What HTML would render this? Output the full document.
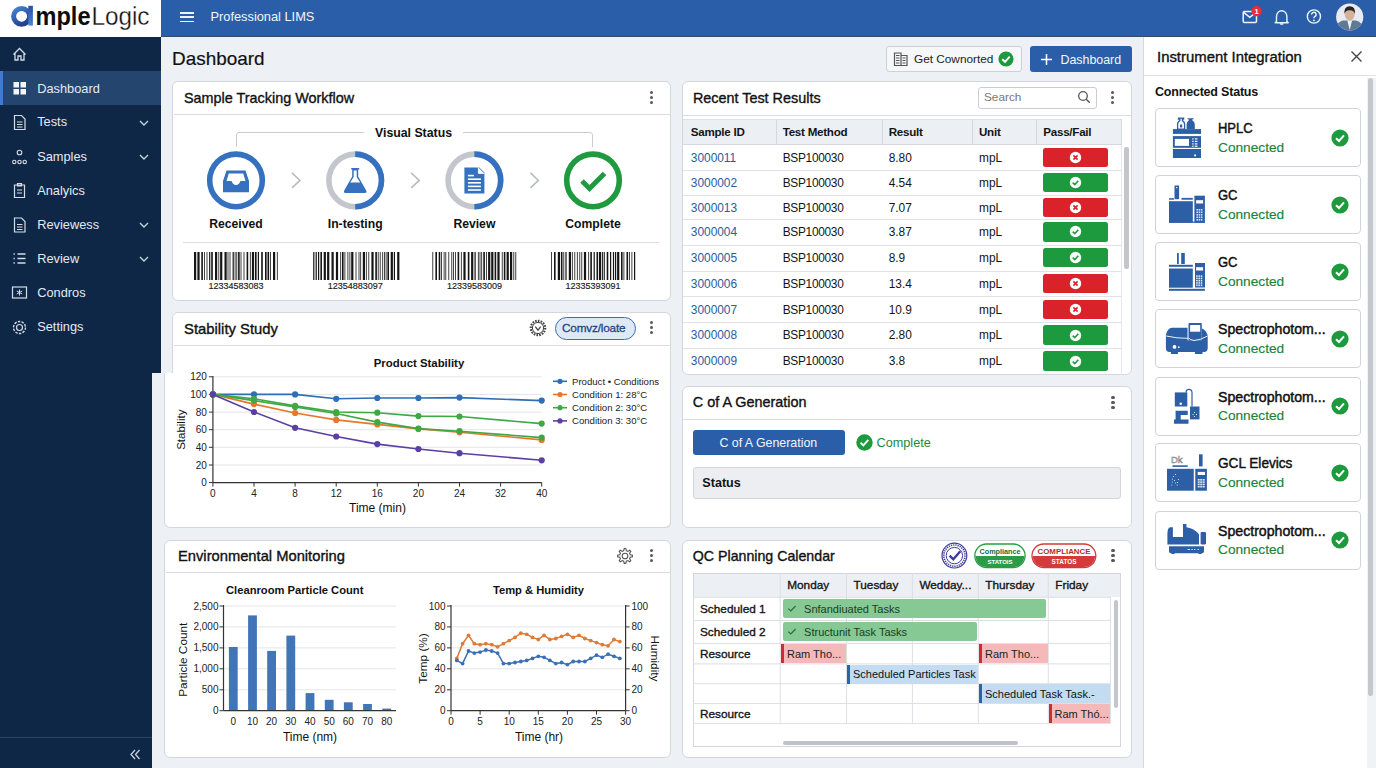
<!DOCTYPE html><html><head><meta charset="utf-8"><style>
*{box-sizing:border-box;margin:0;padding:0}
html,body{width:1376px;height:768px;overflow:hidden}
body{font-family:"Liberation Sans",sans-serif;background:#edf0f5;position:relative;color:#141414}
.ab{position:absolute}
.t{position:absolute;white-space:nowrap;line-height:1}
.card{position:absolute;background:#fff;border:1px solid #d3d7dd;border-radius:6px}
.hline{position:absolute;height:1px;background:#d9dce2}
.vline{position:absolute;width:1px;background:#d9dce2}
.dots{position:absolute;width:4px}
.dots i{position:absolute;left:0.2px;width:3.2px;height:3.2px;border-radius:50%;background:#55585d}
.nav{color:#e3e8ef;font-size:13.4px}
.med{-webkit-text-stroke:0.25px currentColor}
</style></head><body>
<div class="ab" style="left:0;top:0;width:161px;height:37px;background:#fff"></div>
<div class="ab" style="left:161px;top:0;width:1215px;height:37px;background:#2a5ea8;border-bottom:1px solid #3a4a60"></div>
<svg class="ab" style="left:0;top:0" width="161" height="37" viewBox="0 0 161 37">
<defs><linearGradient id="lg" x1="0" y1="0" x2="0.6" y2="1"><stop offset="0" stop-color="#4583d4"/><stop offset="1" stop-color="#233f8e"/></linearGradient>
<linearGradient id="lg2" x1="0" y1="0" x2="0" y2="1"><stop offset="0" stop-color="#2d4f9f"/><stop offset="1" stop-color="#4a86d2"/></linearGradient></defs>
<ellipse cx="21.6" cy="16.3" rx="8" ry="7.9" fill="none" stroke="url(#lg)" stroke-width="5"/>
<rect x="28.3" y="5.8" width="4.6" height="19.8" fill="url(#lg2)"/>
<text x="35.5" y="25" font-family="Liberation Sans" font-weight="bold" font-size="26.5" fill="#0d0d0d" textLength="55" lengthAdjust="spacingAndGlyphs">mple</text>
<text x="91.5" y="25" font-family="Liberation Sans" font-size="26" fill="#111" stroke="#fff" stroke-width="0.3" textLength="58" lengthAdjust="spacingAndGlyphs">Logic</text>
</svg>
<div class="ab" style="left:180px;top:12.0px;width:14px;height:1.8px;background:#f0f4fa"></div>
<div class="ab" style="left:180px;top:16.3px;width:14px;height:1.8px;background:#f0f4fa"></div>
<div class="ab" style="left:180px;top:20.6px;width:14px;height:1.8px;background:#f0f4fa"></div>
<div class="t" style="left:210.5px;top:10.7px;font-size:12.8px;color:#f2f5fa;">Professional LIMS</div>
<svg class="ab" style="left:1230px;top:0" width="146" height="37" viewBox="0 0 146 37">
<rect x="13.2" y="11.6" width="13.3" height="10.8" rx="1.2" fill="none" stroke="#eef3fb" stroke-width="1.5"/>
<path d="M13.6 12.3 L19.8 17.3 L26 12.3" fill="none" stroke="#eef3fb" stroke-width="1.5"/>
<circle cx="26.5" cy="11" r="5.2" fill="#e0303a"/>
<text x="26.5" y="14" font-family="Liberation Sans" font-weight="bold" font-size="7.5" fill="#fff" text-anchor="middle">1</text>
<path d="M46.5 21.5 L46.5 16.5 A5.2 5.8 0 0 1 56.9 16.5 L56.9 21.5 L58.2 22.8 L45.2 22.8 Z" fill="none" stroke="#eef3fb" stroke-width="1.4" stroke-linejoin="round"/>
<path d="M50.3 23.3 A1.6 1.6 0 0 0 53.1 23.3" fill="none" stroke="#eef3fb" stroke-width="1.4"/>
<circle cx="83.9" cy="16.5" r="6.6" fill="none" stroke="#eef3fb" stroke-width="1.4"/>
<path d="M81.7 14.6 A2.2 2.2 0 1 1 84.6 16.6 Q83.9 17 83.9 18.3" fill="none" stroke="#eef3fb" stroke-width="1.4"/>
<circle cx="83.9" cy="20.4" r="0.9" fill="#eef3fb"/>
<circle cx="119.7" cy="17" r="13.6" fill="#e8ecf2"/>
<clipPath id="av"><circle cx="119.7" cy="17" r="13.6"/></clipPath>
<g clip-path="url(#av)">
<path d="M104 32 Q106 22.5 113 20.6 L126 20.6 Q133 22.5 135 32 Z" fill="#607a96"/>
<path d="M117.3 20.6 L119.7 30 L122.1 20.6 Z" fill="#eef1f4"/>
<ellipse cx="119.7" cy="14.6" rx="4.9" ry="5.7" fill="#d6b29a"/>
<path d="M114.6 14 Q113.6 6.3 119.7 6.3 Q125.8 6.3 124.8 14 Q124 10 119.7 10.2 Q115.4 10 114.6 14Z" fill="#2a2521"/>
</g>
</svg>
<div class="ab" style="left:0;top:37px;width:161px;height:336px;background:#0f2747"></div>
<div class="ab" style="left:0;top:373px;width:152px;height:395px;background:#0f2747"></div>
<div class="ab" style="left:0;top:71px;width:161px;height:34px;background:#24466e"></div>
<div class="ab" style="left:0;top:71px;width:3px;height:34px;background:#3c7bd0"></div>
<div class="ab" style="left:0;top:736.5px;width:152px;height:1px;background:#2a4566"></div>
<div class="t" style="left:37.2px;top:82.6px;font-size:12.8px;color:#e4e9f0;">Dashboard</div>
<div class="t" style="left:37.2px;top:116.4px;font-size:12.8px;color:#e4e9f0;">Tests</div>
<svg class="ab" style="left:138px;top:118.8px" width="12" height="8" viewBox="0 0 12 8"><path d="M2 2 L6 6 L10 2" fill="none" stroke="#c8d1dc" stroke-width="1.4"/></svg>
<div class="t" style="left:37.2px;top:150.6px;font-size:12.8px;color:#e4e9f0;">Samples</div>
<svg class="ab" style="left:138px;top:153.0px" width="12" height="8" viewBox="0 0 12 8"><path d="M2 2 L6 6 L10 2" fill="none" stroke="#c8d1dc" stroke-width="1.4"/></svg>
<div class="t" style="left:37.2px;top:184.6px;font-size:12.8px;color:#e4e9f0;">Analyics</div>
<div class="t" style="left:37.2px;top:218.6px;font-size:12.8px;color:#e4e9f0;">Reviewess</div>
<svg class="ab" style="left:138px;top:221.0px" width="12" height="8" viewBox="0 0 12 8"><path d="M2 2 L6 6 L10 2" fill="none" stroke="#c8d1dc" stroke-width="1.4"/></svg>
<div class="t" style="left:37.2px;top:252.6px;font-size:12.8px;color:#e4e9f0;">Review</div>
<svg class="ab" style="left:138px;top:255.0px" width="12" height="8" viewBox="0 0 12 8"><path d="M2 2 L6 6 L10 2" fill="none" stroke="#c8d1dc" stroke-width="1.4"/></svg>
<div class="t" style="left:37.2px;top:286.6px;font-size:12.8px;color:#e4e9f0;">Condros</div>
<div class="t" style="left:37.2px;top:320.6px;font-size:12.8px;color:#e4e9f0;">Settings</div>
<svg class="ab" style="left:0;top:37px" width="161" height="336" viewBox="0 37 161 336">
<path d="M13.5 54.5 L19.5 48.5 L25.5 54.5 M15 53.5 L15 60 L18 60 L18 56 L21 56 L21 60 L24 60 L24 53.5" fill="none" stroke="#d5dce6" stroke-width="1.3"/>
<rect x="13.5" y="82" width="5.5" height="5.5" fill="#f2f5fa"/><rect x="20.5" y="82" width="5.5" height="5.5" fill="#f2f5fa"/>
<rect x="13.5" y="89" width="5.5" height="5.5" fill="#f2f5fa"/><rect x="20.5" y="89" width="5.5" height="5.5" fill="#f2f5fa"/>
<path d="M14.5 115.5 L21.5 115.5 L25 119 L25 129.5 L14.5 129.5 Z M17 122 L22.5 122 M17 124.5 L22.5 124.5 M17 127 L22.5 127" fill="none" stroke="#d5dce6" stroke-width="1.2"/>
<circle cx="19.5" cy="152.5" r="2.3" fill="none" stroke="#d5dce6" stroke-width="1.1"/>
<circle cx="14.3" cy="162" r="1.7" fill="none" stroke="#d5dce6" stroke-width="1.1"/><circle cx="19.5" cy="162" r="1.7" fill="none" stroke="#d5dce6" stroke-width="1.1"/><circle cx="24.7" cy="162" r="1.7" fill="none" stroke="#d5dce6" stroke-width="1.1"/>
<path d="M14.5 185 L24.5 185 L24.5 197.5 L14.5 197.5 Z M17.5 183.5 L21.5 183.5 L21.5 186 L17.5 186Z M17 190 L22 190 M17 193 L22 193" fill="none" stroke="#d5dce6" stroke-width="1.2"/>
<path d="M14.5 218 L21.5 218 L25 221.5 L25 232 L14.5 232 Z M17 224.5 L22.5 224.5 M17 227 L22.5 227 M17 229.5 L22.5 229.5" fill="none" stroke="#d5dce6" stroke-width="1.2"/>
<path d="M17.5 254 L25.5 254 M17.5 258.5 L25.5 258.5 M17.5 263 L25.5 263 M13.5 254 L14.8 254 M13.5 258.5 L14.8 258.5 M13.5 263 L14.8 263" fill="none" stroke="#d5dce6" stroke-width="1.3"/>
<rect x="12.5" y="287" width="14" height="11" fill="none" stroke="#d5dce6" stroke-width="1.2"/>
<path d="M19.5 289.5 L19.5 295.5 M16.8 291 L22.2 294 M22.2 291 L16.8 294" stroke="#d5dce6" stroke-width="1"/>
<circle cx="19.5" cy="327.5" r="3" fill="none" stroke="#d5dce6" stroke-width="1.2"/>
<circle cx="19.5" cy="327.5" r="6" fill="none" stroke="#d5dce6" stroke-width="1.4" stroke-dasharray="2.4 1.3"/>
</svg>
<svg class="ab" style="left:128px;top:748px" width="14" height="13" viewBox="0 0 14 13"><path d="M7 2 L3 6.5 L7 11 M11.5 2 L7.5 6.5 L11.5 11" fill="none" stroke="#c8d1dc" stroke-width="1.3"/></svg>
<div class="t" style="left:172.3px;top:48.8px;font-size:19px;color:#111;transform:scaleX(0.9952);transform-origin:0 0;-webkit-text-stroke:0.2px #111">Dashboard</div>
<div class="ab" style="left:886px;top:46px;width:136px;height:26px;background:#f6f7f9;border:1px solid #cdd1d7;border-radius:3px"></div>
<svg class="ab" style="left:893px;top:51px" width="16" height="16" viewBox="0 0 16 16">
<path d="M1.5 2 L8 2 L8 14.5 L1.5 14.5 Z M8 4.5 L14 4.5 L14 14.5 L8 14.5" fill="none" stroke="#555" stroke-width="1.2"/>
<path d="M3 4.5 L6.5 4.5 M3 7 L6.5 7 M3 9.5 L6.5 9.5 M3 12 L6.5 12 M9.5 7 L12.5 7 M9.5 9.5 L12.5 9.5 M9.5 12 L12.5 12" stroke="#555" stroke-width="1"/>
</svg>
<div class="t" style="left:914.0px;top:53.6px;font-size:11.8px;color:#222;">Get Cownorted</div>
<svg class="ab" style="left:998px;top:51px" width="16" height="16" viewBox="0 0 16 16"><circle cx="8" cy="8" r="7.6" fill="#1e9a3e"/><path d="M4.3 8.2 L7 10.8 L11.7 5.6" fill="none" stroke="#fff" stroke-width="1.9"/></svg>
<div class="ab" style="left:1030px;top:46px;width:102px;height:26px;background:#2a5ea8;border-radius:3px"></div>
<svg class="ab" style="left:1040px;top:53px" width="13" height="13" viewBox="0 0 13 13"><path d="M6.5 1 L6.5 12 M1 6.5 L12 6.5" stroke="#fff" stroke-width="1.5"/></svg>
<div class="t" style="left:1060.5px;top:53.5px;font-size:12.4px;color:#f4f7fb;">Dashboard</div>
<div class="card" style="left:172px;top:81px;width:499px;height:220px"></div>
<div class="hline" style="left:174px;top:114px;width:496px"></div>
<div class="t" style="left:184.0px;top:90.8px;font-size:14.4px;color:#111;-webkit-text-stroke:0.35px #111">Sample Tracking Workflow</div>
<div class="dots" style="left:649.7px;top:90.5px;height:14px"><i style="top:0"></i><i style="top:5px"></i><i style="top:10px"></i></div>
<svg class="ab" style="left:173px;top:81px" width="498" height="220" viewBox="173 81 498 220"><path d="M236.5 147 L236.5 135 Q236.5 132.5 239 132.5 L364 132.5 M463 132.5 L590 132.5 Q592.5 132.5 592.5 135 L592.5 147" fill="none" stroke="#c9ccd2" stroke-width="1"/></svg>
<div class="t" style="left:375.0px;top:126.8px;font-size:12.3px;color:#111;font-weight:bold;">Visual Status</div>
<svg class="ab" style="left:173px;top:140px" width="498" height="100" viewBox="173 140 498 100"><circle cx="236" cy="180.4" r="26.3" fill="none" stroke="#3571bf" stroke-width="5.6"/><circle cx="355.2" cy="180.4" r="26.3" fill="none" stroke="#c3c7cd" stroke-width="5.6"/><path d="M355.2 154.1 A26.3 26.3 0 0 1 355.2 206.70000000000002" fill="none" stroke="#3571bf" stroke-width="5.6"/><circle cx="474.4" cy="180.4" r="26.3" fill="none" stroke="#c3c7cd" stroke-width="5.6"/><path d="M474.4 154.1 A26.3 26.3 0 0 1 474.4 206.70000000000002" fill="none" stroke="#3571bf" stroke-width="5.6"/><circle cx="593" cy="180.4" r="26.3" fill="none" stroke="#1f9a3f" stroke-width="5.6"/><path d="M223 180.9 L226.5 170.4 L245.5 170.4 L249 180.9 L249 192.20000000000002 L223 192.20000000000002 Z" fill="#3571bf"/><path d="M226.5 180.9 L228.8 173.4 L243.2 173.4 L245.5 180.9 L240.5 180.9 Q239 184.9 236 184.9 Q233 184.9 231.5 180.9 Z" fill="#fff"/><path d="M351.2 167.9 L359.2 167.9 L359.2 169.4 L358.2 169.4 L358.2 176.4 L366.2 190.4 Q367.2 192.9 364.7 192.9 L345.7 192.9 Q343.2 192.9 344.2 190.4 L352.2 176.4 L352.2 169.4 L351.2 169.4 Z" fill="#3571bf"/><path d="M353.7 170.4 L356.7 170.4 L356.7 176.9 L360.2 182.4 L350.2 182.4 L353.7 176.9 Z" fill="#fff"/><path d="M464.4 167.4 L479.4 167.4 L484.4 172.4 L484.4 193.4 L464.4 193.4 Z" fill="#3571bf"/><path d="M478.4 167.4 L478.4 173.4 L484.4 173.4" fill="#fff" stroke="#fff" stroke-width="0.8"/><rect x="467.9" y="178.4" width="13" height="1.6" fill="#fff"/><rect x="467.9" y="182.0" width="13" height="1.6" fill="#fff"/><rect x="467.9" y="185.6" width="13" height="1.6" fill="#fff"/><rect x="467.9" y="189.2" width="13" height="1.6" fill="#fff"/><rect x="467.9" y="174.8" width="6" height="1.6" fill="#fff"/><path d="M582 180.9 L589.5 188.4 L604.5 173.4" fill="none" stroke="#1f9a3f" stroke-width="5"/><path d="M292 172.9 L300 180.4 L292 187.9" fill="none" stroke="#b8bcc2" stroke-width="1.6"/><path d="M411.2 172.9 L419.2 180.4 L411.2 187.9" fill="none" stroke="#b8bcc2" stroke-width="1.6"/><path d="M530.4 172.9 L538.4 180.4 L530.4 187.9" fill="none" stroke="#b8bcc2" stroke-width="1.6"/></svg>
<div class="t" style="left:186px;width:100px;text-align:center;top:217.6px;font-size:12.2px;font-weight:bold;color:#111">Received</div>
<div class="t" style="left:305.2px;width:100px;text-align:center;top:217.6px;font-size:12.2px;font-weight:bold;color:#111">In-testing</div>
<div class="t" style="left:424.4px;width:100px;text-align:center;top:217.6px;font-size:12.2px;font-weight:bold;color:#111">Review</div>
<div class="t" style="left:543px;width:100px;text-align:center;top:217.6px;font-size:12.2px;font-weight:bold;color:#111">Complete</div>
<div class="hline" style="left:183px;top:241.5px;width:476px;background:#dcdfe4"></div>
<svg class="ab" style="left:173px;top:245px" width="498" height="55" viewBox="173 245 498 55"><rect x="194.0" y="252" width="2.2" height="28" fill="#151515"/><rect x="197.4" y="252" width="2.2" height="28" fill="#151515"/><rect x="201.3" y="252" width="1.6" height="28" fill="#151515"/><rect x="204.1" y="252" width="0.8" height="28" fill="#151515"/><rect x="206.6" y="252" width="0.8" height="28" fill="#151515"/><rect x="209.1" y="252" width="1.2" height="28" fill="#151515"/><rect x="211.2" y="252" width="1.6" height="28" fill="#151515"/><rect x="215.0" y="252" width="2.2" height="28" fill="#151515"/><rect x="218.4" y="252" width="0.8" height="28" fill="#151515"/><rect x="220.1" y="252" width="2.2" height="28" fill="#151515"/><rect x="224.5" y="252" width="2.2" height="28" fill="#151515"/><rect x="227.6" y="252" width="0.8" height="28" fill="#151515"/><rect x="229.6" y="252" width="0.8" height="28" fill="#151515"/><rect x="232.6" y="252" width="1.2" height="28" fill="#151515"/><rect x="234.7" y="252" width="0.8" height="28" fill="#151515"/><rect x="236.4" y="252" width="0.8" height="28" fill="#151515"/><rect x="238.1" y="252" width="1.6" height="28" fill="#151515"/><rect x="240.6" y="252" width="0.8" height="28" fill="#151515"/><rect x="243.6" y="252" width="0.8" height="28" fill="#151515"/><rect x="246.6" y="252" width="1.6" height="28" fill="#151515"/><rect x="249.9" y="252" width="0.8" height="28" fill="#151515"/><rect x="251.9" y="252" width="2.2" height="28" fill="#151515"/><rect x="255.0" y="252" width="1.6" height="28" fill="#151515"/><rect x="257.8" y="252" width="1.2" height="28" fill="#151515"/><rect x="261.2" y="252" width="1.6" height="28" fill="#151515"/><rect x="265.0" y="252" width="1.6" height="28" fill="#151515"/><rect x="267.5" y="252" width="1.6" height="28" fill="#151515"/><rect x="270.0" y="252" width="0.8" height="28" fill="#151515"/><rect x="273.0" y="252" width="2.2" height="28" fill="#151515"/><rect x="276.9" y="252" width="0.8" height="28" fill="#151515"/><text x="236" y="289.3" font-family="Liberation Sans" font-size="9" fill="#1a1a1a" stroke="#1a1a1a" stroke-width="0.15" text-anchor="middle" textLength="55" lengthAdjust="spacingAndGlyphs">12334583083</text><rect x="313.2" y="252" width="1.2" height="28" fill="#151515"/><rect x="315.6" y="252" width="1.2" height="28" fill="#151515"/><rect x="318.0" y="252" width="1.2" height="28" fill="#151515"/><rect x="320.4" y="252" width="1.6" height="28" fill="#151515"/><rect x="323.7" y="252" width="2.2" height="28" fill="#151515"/><rect x="327.1" y="252" width="2.2" height="28" fill="#151515"/><rect x="331.5" y="252" width="2.2" height="28" fill="#151515"/><rect x="335.9" y="252" width="2.2" height="28" fill="#151515"/><rect x="340.3" y="252" width="0.8" height="28" fill="#151515"/><rect x="342.0" y="252" width="1.6" height="28" fill="#151515"/><rect x="344.5" y="252" width="0.8" height="28" fill="#151515"/><rect x="347.5" y="252" width="0.8" height="28" fill="#151515"/><rect x="349.5" y="252" width="0.8" height="28" fill="#151515"/><rect x="351.2" y="252" width="2.2" height="28" fill="#151515"/><rect x="355.6" y="252" width="0.8" height="28" fill="#151515"/><rect x="358.6" y="252" width="0.8" height="28" fill="#151515"/><rect x="360.3" y="252" width="0.8" height="28" fill="#151515"/><rect x="362.8" y="252" width="2.2" height="28" fill="#151515"/><rect x="365.9" y="252" width="0.8" height="28" fill="#151515"/><rect x="368.4" y="252" width="0.8" height="28" fill="#151515"/><rect x="371.4" y="252" width="2.2" height="28" fill="#151515"/><rect x="375.3" y="252" width="1.6" height="28" fill="#151515"/><rect x="377.8" y="252" width="0.8" height="28" fill="#151515"/><rect x="379.8" y="252" width="0.8" height="28" fill="#151515"/><rect x="382.3" y="252" width="0.8" height="28" fill="#151515"/><rect x="384.0" y="252" width="0.8" height="28" fill="#151515"/><rect x="385.7" y="252" width="0.8" height="28" fill="#151515"/><rect x="387.4" y="252" width="1.6" height="28" fill="#151515"/><rect x="390.7" y="252" width="2.2" height="28" fill="#151515"/><rect x="393.8" y="252" width="1.2" height="28" fill="#151515"/><rect x="397.2" y="252" width="2.2" height="28" fill="#151515"/><text x="355.2" y="289.3" font-family="Liberation Sans" font-size="9" fill="#1a1a1a" stroke="#1a1a1a" stroke-width="0.15" text-anchor="middle" textLength="55" lengthAdjust="spacingAndGlyphs">12354883097</text><rect x="432.4" y="252" width="0.8" height="28" fill="#151515"/><rect x="435.4" y="252" width="1.6" height="28" fill="#151515"/><rect x="438.7" y="252" width="1.6" height="28" fill="#151515"/><rect x="441.2" y="252" width="0.8" height="28" fill="#151515"/><rect x="443.7" y="252" width="0.8" height="28" fill="#151515"/><rect x="445.4" y="252" width="0.8" height="28" fill="#151515"/><rect x="448.4" y="252" width="0.8" height="28" fill="#151515"/><rect x="451.4" y="252" width="0.8" height="28" fill="#151515"/><rect x="453.1" y="252" width="0.8" height="28" fill="#151515"/><rect x="455.1" y="252" width="0.8" height="28" fill="#151515"/><rect x="457.6" y="252" width="1.6" height="28" fill="#151515"/><rect x="460.9" y="252" width="0.8" height="28" fill="#151515"/><rect x="463.4" y="252" width="2.2" height="28" fill="#151515"/><rect x="467.8" y="252" width="1.6" height="28" fill="#151515"/><rect x="471.1" y="252" width="2.2" height="28" fill="#151515"/><rect x="474.5" y="252" width="1.2" height="28" fill="#151515"/><rect x="477.9" y="252" width="0.8" height="28" fill="#151515"/><rect x="479.6" y="252" width="0.8" height="28" fill="#151515"/><rect x="481.3" y="252" width="0.8" height="28" fill="#151515"/><rect x="483.3" y="252" width="1.6" height="28" fill="#151515"/><rect x="486.1" y="252" width="0.8" height="28" fill="#151515"/><rect x="488.1" y="252" width="2.2" height="28" fill="#151515"/><rect x="491.2" y="252" width="2.2" height="28" fill="#151515"/><rect x="494.6" y="252" width="1.6" height="28" fill="#151515"/><rect x="497.4" y="252" width="2.2" height="28" fill="#151515"/><rect x="501.8" y="252" width="0.8" height="28" fill="#151515"/><rect x="503.8" y="252" width="1.6" height="28" fill="#151515"/><rect x="506.6" y="252" width="2.2" height="28" fill="#151515"/><rect x="510.0" y="252" width="2.2" height="28" fill="#151515"/><rect x="513.4" y="252" width="0.8" height="28" fill="#151515"/><rect x="515.4" y="252" width="0.8" height="28" fill="#151515"/><text x="474.4" y="289.3" font-family="Liberation Sans" font-size="9" fill="#1a1a1a" stroke="#1a1a1a" stroke-width="0.15" text-anchor="middle" textLength="55" lengthAdjust="spacingAndGlyphs">12339583009</text><rect x="551.0" y="252" width="0.8" height="28" fill="#151515"/><rect x="554.0" y="252" width="1.6" height="28" fill="#151515"/><rect x="557.8" y="252" width="2.2" height="28" fill="#151515"/><rect x="560.9" y="252" width="1.6" height="28" fill="#151515"/><rect x="563.4" y="252" width="0.8" height="28" fill="#151515"/><rect x="565.4" y="252" width="1.2" height="28" fill="#151515"/><rect x="568.8" y="252" width="2.2" height="28" fill="#151515"/><rect x="571.9" y="252" width="0.8" height="28" fill="#151515"/><rect x="574.4" y="252" width="0.8" height="28" fill="#151515"/><rect x="576.9" y="252" width="0.8" height="28" fill="#151515"/><rect x="579.4" y="252" width="0.8" height="28" fill="#151515"/><rect x="581.4" y="252" width="0.8" height="28" fill="#151515"/><rect x="583.9" y="252" width="2.2" height="28" fill="#151515"/><rect x="588.3" y="252" width="0.8" height="28" fill="#151515"/><rect x="590.3" y="252" width="1.6" height="28" fill="#151515"/><rect x="593.6" y="252" width="1.2" height="28" fill="#151515"/><rect x="596.5" y="252" width="1.6" height="28" fill="#151515"/><rect x="599.0" y="252" width="2.2" height="28" fill="#151515"/><rect x="602.1" y="252" width="1.2" height="28" fill="#151515"/><rect x="604.2" y="252" width="0.8" height="28" fill="#151515"/><rect x="606.7" y="252" width="1.6" height="28" fill="#151515"/><rect x="610.0" y="252" width="1.2" height="28" fill="#151515"/><rect x="612.9" y="252" width="1.2" height="28" fill="#151515"/><rect x="615.0" y="252" width="1.2" height="28" fill="#151515"/><rect x="617.1" y="252" width="2.2" height="28" fill="#151515"/><rect x="621.0" y="252" width="1.6" height="28" fill="#151515"/><rect x="623.5" y="252" width="0.8" height="28" fill="#151515"/><rect x="626.5" y="252" width="1.6" height="28" fill="#151515"/><rect x="629.0" y="252" width="0.8" height="28" fill="#151515"/><rect x="631.5" y="252" width="0.8" height="28" fill="#151515"/><rect x="634.0" y="252" width="1.2" height="28" fill="#151515"/><text x="593" y="289.3" font-family="Liberation Sans" font-size="9" fill="#1a1a1a" stroke="#1a1a1a" stroke-width="0.15" text-anchor="middle" textLength="55" lengthAdjust="spacingAndGlyphs">12335393091</text></svg>
<div class="ab" style="left:172px;top:312px;width:499px;height:216px;background:#fff;border:1px solid #d3d7dd;border-radius:6px"></div>
<div class="ab" style="left:152px;top:373px;width:20px;height:160px;background:#edf0f5"></div>
<div class="ab" style="left:164px;top:373px;width:507px;height:155px;background:#fff;border:1px solid #d3d7dd;border-top:none;border-radius:0 0 6px 6px"></div>
<div class="ab" style="left:165px;top:373px;width:505px;height:3px;background:#fff"></div>
<div class="hline" style="left:174px;top:344.5px;width:496px"></div>
<div class="t" style="left:183.5px;top:321.5px;font-size:14.5px;color:#111;transform:scaleX(1.0231);transform-origin:0 0;-webkit-text-stroke:0.35px #111">Stability Study</div>
<svg class="ab" style="left:528px;top:318px" width="20" height="20" viewBox="0 0 20 20">
<circle cx="10" cy="10" r="7.2" fill="none" stroke="#444" stroke-width="2.2" stroke-dasharray="1.6 1.2"/>
<circle cx="10" cy="10" r="5.6" fill="#fff" stroke="#444" stroke-width="1"/>
<path d="M7.3 8.6 L10 12.2 L12.7 8.6" fill="none" stroke="#444" stroke-width="1.2"/></svg>
<div class="ab" style="left:554.5px;top:317px;width:81px;height:23px;background:#dfe9f6;border:1.3px solid #3a6cb2;border-radius:12px"></div>
<div class="t" style="left:562.0px;top:322.6px;font-size:11.8px;color:#1f4585;-webkit-text-stroke:0.3px #1f4585;letter-spacing:-0.2px">Comvz/loate</div>
<div class="dots" style="left:649.7px;top:321.0px;height:14px"><i style="top:0"></i><i style="top:5px"></i><i style="top:10px"></i></div>
<svg class="ab" style="left:0;top:0" width="680" height="530" viewBox="0 0 680 530"><text x="419" y="367.3" font-family="Liberation Sans" font-weight="bold" font-size="11.4" fill="#111" text-anchor="middle">Product Stability</text><line x1="208.9" y1="482.6" x2="212.9" y2="482.6" stroke="#333" stroke-width="1"/><text x="206.9" y="486.2" font-family="Liberation Sans" font-size="10" fill="#222" text-anchor="end">0</text><line x1="212.9" y1="465.0" x2="541.7" y2="465.0" stroke="#e3e5e9" stroke-width="1"/><line x1="208.9" y1="465.0" x2="212.9" y2="465.0" stroke="#333" stroke-width="1"/><text x="206.9" y="468.6" font-family="Liberation Sans" font-size="10" fill="#222" text-anchor="end">20</text><line x1="212.9" y1="447.3" x2="541.7" y2="447.3" stroke="#e3e5e9" stroke-width="1"/><line x1="208.9" y1="447.3" x2="212.9" y2="447.3" stroke="#333" stroke-width="1"/><text x="206.9" y="450.9" font-family="Liberation Sans" font-size="10" fill="#222" text-anchor="end">40</text><line x1="212.9" y1="429.7" x2="541.7" y2="429.7" stroke="#e3e5e9" stroke-width="1"/><line x1="208.9" y1="429.7" x2="212.9" y2="429.7" stroke="#333" stroke-width="1"/><text x="206.9" y="433.3" font-family="Liberation Sans" font-size="10" fill="#222" text-anchor="end">60</text><line x1="212.9" y1="412.1" x2="541.7" y2="412.1" stroke="#e3e5e9" stroke-width="1"/><line x1="208.9" y1="412.1" x2="212.9" y2="412.1" stroke="#333" stroke-width="1"/><text x="206.9" y="415.7" font-family="Liberation Sans" font-size="10" fill="#222" text-anchor="end">80</text><line x1="212.9" y1="394.4" x2="541.7" y2="394.4" stroke="#e3e5e9" stroke-width="1"/><line x1="208.9" y1="394.4" x2="212.9" y2="394.4" stroke="#333" stroke-width="1"/><text x="206.9" y="398.0" font-family="Liberation Sans" font-size="10" fill="#222" text-anchor="end">100</text><line x1="212.9" y1="376.8" x2="541.7" y2="376.8" stroke="#e3e5e9" stroke-width="1"/><line x1="208.9" y1="376.8" x2="212.9" y2="376.8" stroke="#333" stroke-width="1"/><text x="206.9" y="380.4" font-family="Liberation Sans" font-size="10" fill="#222" text-anchor="end">120</text><line x1="212.9" y1="376" x2="212.9" y2="482.6" stroke="#333" stroke-width="1.2"/><line x1="212.9" y1="482.6" x2="541.7" y2="482.6" stroke="#333" stroke-width="1.2"/><line x1="212.9" y1="482.6" x2="212.9" y2="486.6" stroke="#333" stroke-width="1"/><text x="212.9" y="497.1" font-family="Liberation Sans" font-size="10" fill="#222" text-anchor="middle">0</text><line x1="254.0" y1="482.6" x2="254.0" y2="486.6" stroke="#333" stroke-width="1"/><text x="254.0" y="497.1" font-family="Liberation Sans" font-size="10" fill="#222" text-anchor="middle">4</text><line x1="295.1" y1="482.6" x2="295.1" y2="486.6" stroke="#333" stroke-width="1"/><text x="295.1" y="497.1" font-family="Liberation Sans" font-size="10" fill="#222" text-anchor="middle">8</text><line x1="336.2" y1="482.6" x2="336.2" y2="486.6" stroke="#333" stroke-width="1"/><text x="336.2" y="497.1" font-family="Liberation Sans" font-size="10" fill="#222" text-anchor="middle">12</text><line x1="377.3" y1="482.6" x2="377.3" y2="486.6" stroke="#333" stroke-width="1"/><text x="377.3" y="497.1" font-family="Liberation Sans" font-size="10" fill="#222" text-anchor="middle">16</text><line x1="418.4" y1="482.6" x2="418.4" y2="486.6" stroke="#333" stroke-width="1"/><text x="418.4" y="497.1" font-family="Liberation Sans" font-size="10" fill="#222" text-anchor="middle">20</text><line x1="459.5" y1="482.6" x2="459.5" y2="486.6" stroke="#333" stroke-width="1"/><text x="459.5" y="497.1" font-family="Liberation Sans" font-size="10" fill="#222" text-anchor="middle">24</text><line x1="500.6" y1="482.6" x2="500.6" y2="486.6" stroke="#333" stroke-width="1"/><text x="500.6" y="497.1" font-family="Liberation Sans" font-size="10" fill="#222" text-anchor="middle">32</text><line x1="541.7" y1="482.6" x2="541.7" y2="486.6" stroke="#333" stroke-width="1"/><text x="541.7" y="497.1" font-family="Liberation Sans" font-size="10" fill="#222" text-anchor="middle">40</text><text transform="translate(184.5,429.7) rotate(-90)" font-family="Liberation Sans" font-size="11.5" fill="#111" text-anchor="middle">Stability</text><text x="377.5" y="512" font-family="Liberation Sans" font-size="12" fill="#111" text-anchor="middle">Time (min)</text><polyline points="212.9,394.4 254.0,394.4 295.1,394.4 336.2,398.8 377.3,398.0 418.4,398.0 459.5,397.6 541.7,400.6" fill="none" stroke="#2f6db5" stroke-width="1.6"/><circle cx="212.9" cy="394.4" r="3.1" fill="#2f6db5"/><circle cx="254.0" cy="394.4" r="3.1" fill="#2f6db5"/><circle cx="295.1" cy="394.4" r="3.1" fill="#2f6db5"/><circle cx="336.2" cy="398.8" r="3.1" fill="#2f6db5"/><circle cx="377.3" cy="398.0" r="3.1" fill="#2f6db5"/><circle cx="418.4" cy="398.0" r="3.1" fill="#2f6db5"/><circle cx="459.5" cy="397.6" r="3.1" fill="#2f6db5"/><circle cx="541.7" cy="400.6" r="3.1" fill="#2f6db5"/><polyline points="212.9,394.4 254.0,404.1 295.1,413.0 336.2,419.9 377.3,424.4 418.4,428.9 459.5,432.3 541.7,439.9" fill="none" stroke="#e8762b" stroke-width="1.6"/><circle cx="212.9" cy="394.4" r="3.1" fill="#e8762b"/><circle cx="254.0" cy="404.1" r="3.1" fill="#e8762b"/><circle cx="295.1" cy="413.0" r="3.1" fill="#e8762b"/><circle cx="336.2" cy="419.9" r="3.1" fill="#e8762b"/><circle cx="377.3" cy="424.4" r="3.1" fill="#e8762b"/><circle cx="418.4" cy="428.9" r="3.1" fill="#e8762b"/><circle cx="459.5" cy="432.3" r="3.1" fill="#e8762b"/><circle cx="541.7" cy="439.9" r="3.1" fill="#e8762b"/><polyline points="212.9,394.4 254.0,400.6 295.1,407.0 336.2,413.5 377.3,422.1 418.4,428.6 459.5,431.2 541.7,437.6" fill="none" stroke="#3ea845" stroke-width="1.6"/><circle cx="212.9" cy="394.4" r="3.1" fill="#3ea845"/><circle cx="254.0" cy="400.6" r="3.1" fill="#3ea845"/><circle cx="295.1" cy="407.0" r="3.1" fill="#3ea845"/><circle cx="336.2" cy="413.5" r="3.1" fill="#3ea845"/><circle cx="377.3" cy="422.1" r="3.1" fill="#3ea845"/><circle cx="418.4" cy="428.6" r="3.1" fill="#3ea845"/><circle cx="459.5" cy="431.2" r="3.1" fill="#3ea845"/><circle cx="541.7" cy="437.6" r="3.1" fill="#3ea845"/><polyline points="212.9,394.4 254.0,398.8 295.1,405.9 336.2,412.0 377.3,412.7 418.4,416.1 459.5,416.5 541.7,423.6" fill="none" stroke="#3ea845" stroke-width="1.6"/><circle cx="212.9" cy="394.4" r="3.1" fill="#3ea845"/><circle cx="254.0" cy="398.8" r="3.1" fill="#3ea845"/><circle cx="295.1" cy="405.9" r="3.1" fill="#3ea845"/><circle cx="336.2" cy="412.0" r="3.1" fill="#3ea845"/><circle cx="377.3" cy="412.7" r="3.1" fill="#3ea845"/><circle cx="418.4" cy="416.1" r="3.1" fill="#3ea845"/><circle cx="459.5" cy="416.5" r="3.1" fill="#3ea845"/><circle cx="541.7" cy="423.6" r="3.1" fill="#3ea845"/><polyline points="212.9,394.4 254.0,412.0 295.1,427.8 336.2,436.5 377.3,444.1 418.4,449.0 459.5,453.2 541.7,460.3" fill="none" stroke="#5b3fa4" stroke-width="1.6"/><circle cx="212.9" cy="394.4" r="3.1" fill="#5b3fa4"/><circle cx="254.0" cy="412.0" r="3.1" fill="#5b3fa4"/><circle cx="295.1" cy="427.8" r="3.1" fill="#5b3fa4"/><circle cx="336.2" cy="436.5" r="3.1" fill="#5b3fa4"/><circle cx="377.3" cy="444.1" r="3.1" fill="#5b3fa4"/><circle cx="418.4" cy="449.0" r="3.1" fill="#5b3fa4"/><circle cx="459.5" cy="453.2" r="3.1" fill="#5b3fa4"/><circle cx="541.7" cy="460.3" r="3.1" fill="#5b3fa4"/><line x1="553" y1="381.3" x2="567" y2="381.3" stroke="#2f6db5" stroke-width="1.6"/><circle cx="560" cy="381.3" r="2.6" fill="#2f6db5"/><text x="572" y="384.7" font-family="Liberation Sans" font-size="9.6" fill="#222">Product • Conditions</text><line x1="553" y1="394.5" x2="567" y2="394.5" stroke="#e8762b" stroke-width="1.6"/><circle cx="560" cy="394.5" r="2.6" fill="#e8762b"/><text x="572" y="397.9" font-family="Liberation Sans" font-size="9.6" fill="#222">Condition 1: 28°C</text><line x1="553" y1="407.7" x2="567" y2="407.7" stroke="#3ea845" stroke-width="1.6"/><circle cx="560" cy="407.7" r="2.6" fill="#3ea845"/><text x="572" y="411.1" font-family="Liberation Sans" font-size="9.6" fill="#222">Condition 2: 30°C</text><line x1="553" y1="420.9" x2="567" y2="420.9" stroke="#5b3fa4" stroke-width="1.6"/><circle cx="560" cy="420.9" r="2.6" fill="#5b3fa4"/><text x="572" y="424.3" font-family="Liberation Sans" font-size="9.6" fill="#222">Condition 3: 30°C</text></svg>
<div class="card" style="left:164px;top:539.5px;width:507px;height:218px"></div>
<div class="hline" style="left:165.5px;top:572px;width:504px"></div>
<div class="t" style="left:177.8px;top:549.0px;font-size:14.6px;color:#111;transform:scaleX(1.0088);transform-origin:0 0;-webkit-text-stroke:0.35px #111">Environmental Monitoring</div>
<svg class="ab" style="left:615px;top:546px" width="20" height="20" viewBox="0 0 20 20">
<path d="M10 2.2 L11.6 2.2 L12.1 4.4 L13.6 5.1 L15.5 3.9 L16.6 5 L15.4 6.9 L16 8.4 L18.2 8.9 L18.2 10.5 L16 11 L15.4 12.5 L16.6 14.4 L15.5 15.5 L13.6 14.3 L12.1 14.9 L11.6 17.1 L10 17.1 L9.5 14.9 L8 14.3 L6.1 15.5 L5 14.4 L6.2 12.5 L5.6 11 L3.4 10.5 L3.4 8.9 L5.6 8.4 L6.2 6.9 L5 5 L6.1 3.9 L8 5.1 L9.5 4.4 Z" fill="none" stroke="#555" stroke-width="1.1" transform="translate(-0.8,0.3)"/>
<circle cx="10" cy="10" r="2.8" fill="none" stroke="#555" stroke-width="1.1"/></svg>
<div class="dots" style="left:649.7px;top:549.0px;height:14px"><i style="top:0"></i><i style="top:5px"></i><i style="top:10px"></i></div>
<svg class="ab" style="left:0;top:0" width="680" height="768" viewBox="0 0 680 768"><text x="294.7" y="594.3" font-family="Liberation Sans" font-weight="bold" font-size="11.2" fill="#111" text-anchor="middle">Cleanroom Particle Count</text><line x1="219.5" y1="710.7" x2="223.5" y2="710.7" stroke="#333"/><text x="218.5" y="714.2" font-family="Liberation Sans" font-size="10" fill="#222" text-anchor="end">0</text><line x1="223.5" y1="689.8" x2="396" y2="689.8" stroke="#e3e5e9"/><line x1="219.5" y1="689.8" x2="223.5" y2="689.8" stroke="#333"/><text x="218.5" y="693.3" font-family="Liberation Sans" font-size="10" fill="#222" text-anchor="end">500</text><line x1="223.5" y1="668.8" x2="396" y2="668.8" stroke="#e3e5e9"/><line x1="219.5" y1="668.8" x2="223.5" y2="668.8" stroke="#333"/><text x="218.5" y="672.3" font-family="Liberation Sans" font-size="10" fill="#222" text-anchor="end">1,000</text><line x1="223.5" y1="647.9" x2="396" y2="647.9" stroke="#e3e5e9"/><line x1="219.5" y1="647.9" x2="223.5" y2="647.9" stroke="#333"/><text x="218.5" y="651.4" font-family="Liberation Sans" font-size="10" fill="#222" text-anchor="end">1,500</text><line x1="223.5" y1="626.9" x2="396" y2="626.9" stroke="#e3e5e9"/><line x1="219.5" y1="626.9" x2="223.5" y2="626.9" stroke="#333"/><text x="218.5" y="630.4" font-family="Liberation Sans" font-size="10" fill="#222" text-anchor="end">2,000</text><line x1="223.5" y1="606.0" x2="396" y2="606.0" stroke="#e3e5e9"/><line x1="219.5" y1="606.0" x2="223.5" y2="606.0" stroke="#333"/><text x="218.5" y="609.5" font-family="Liberation Sans" font-size="10" fill="#222" text-anchor="end">2,500</text><rect x="228.9" y="647.0" width="8.8" height="63.7" fill="#4274b8"/><text x="233.3" y="725.2" font-family="Liberation Sans" font-size="10" fill="#222" text-anchor="middle">0</text><rect x="248.1" y="615.4" width="8.8" height="95.3" fill="#4274b8"/><text x="252.5" y="725.2" font-family="Liberation Sans" font-size="10" fill="#222" text-anchor="middle">10</text><rect x="267.2" y="650.9" width="8.8" height="59.8" fill="#4274b8"/><text x="271.6" y="725.2" font-family="Liberation Sans" font-size="10" fill="#222" text-anchor="middle">20</text><rect x="286.4" y="635.6" width="8.8" height="75.1" fill="#4274b8"/><text x="290.8" y="725.2" font-family="Liberation Sans" font-size="10" fill="#222" text-anchor="middle">30</text><rect x="305.6" y="693.1" width="8.8" height="17.6" fill="#4274b8"/><text x="310.0" y="725.2" font-family="Liberation Sans" font-size="10" fill="#222" text-anchor="middle">40</text><rect x="324.8" y="699.8" width="8.8" height="10.9" fill="#4274b8"/><text x="329.2" y="725.2" font-family="Liberation Sans" font-size="10" fill="#222" text-anchor="middle">50</text><rect x="343.9" y="702.3" width="8.8" height="8.4" fill="#4274b8"/><text x="348.3" y="725.2" font-family="Liberation Sans" font-size="10" fill="#222" text-anchor="middle">60</text><rect x="363.1" y="704.0" width="8.8" height="6.7" fill="#4274b8"/><text x="367.5" y="725.2" font-family="Liberation Sans" font-size="10" fill="#222" text-anchor="middle">70</text><rect x="382.3" y="708.6" width="8.8" height="2.1" fill="#4274b8"/><text x="386.7" y="725.2" font-family="Liberation Sans" font-size="10" fill="#222" text-anchor="middle">80</text><line x1="223.5" y1="605" x2="223.5" y2="710.7" stroke="#333" stroke-width="1.2"/><line x1="223.5" y1="710.7" x2="396" y2="710.7" stroke="#333" stroke-width="1.2"/><text transform="translate(186.5,659.7) rotate(-90)" font-family="Liberation Sans" font-size="11.8" fill="#111" text-anchor="middle">Particle Count</text><text x="310" y="741" font-family="Liberation Sans" font-size="12" fill="#111" text-anchor="middle">Time (nm)</text><text x="538.5" y="594.3" font-family="Liberation Sans" font-weight="bold" font-size="11.2" fill="#111" text-anchor="middle">Temp &amp; Humidity</text><line x1="447" y1="710.7" x2="451" y2="710.7" stroke="#333"/><line x1="625.6" y1="710.7" x2="629.6" y2="710.7" stroke="#333"/><text x="445.5" y="714.2" font-family="Liberation Sans" font-size="10" fill="#222" text-anchor="end">0</text><text x="631.5" y="714.2" font-family="Liberation Sans" font-size="10" fill="#222">0</text><line x1="451" y1="689.8" x2="625.6" y2="689.8" stroke="#e3e5e9"/><line x1="447" y1="689.8" x2="451" y2="689.8" stroke="#333"/><line x1="625.6" y1="689.8" x2="629.6" y2="689.8" stroke="#333"/><text x="445.5" y="693.3" font-family="Liberation Sans" font-size="10" fill="#222" text-anchor="end">20</text><text x="631.5" y="693.3" font-family="Liberation Sans" font-size="10" fill="#222">20</text><line x1="451" y1="668.8" x2="625.6" y2="668.8" stroke="#e3e5e9"/><line x1="447" y1="668.8" x2="451" y2="668.8" stroke="#333"/><line x1="625.6" y1="668.8" x2="629.6" y2="668.8" stroke="#333"/><text x="445.5" y="672.3" font-family="Liberation Sans" font-size="10" fill="#222" text-anchor="end">40</text><text x="631.5" y="672.3" font-family="Liberation Sans" font-size="10" fill="#222">40</text><line x1="451" y1="647.9" x2="625.6" y2="647.9" stroke="#e3e5e9"/><line x1="447" y1="647.9" x2="451" y2="647.9" stroke="#333"/><line x1="625.6" y1="647.9" x2="629.6" y2="647.9" stroke="#333"/><text x="445.5" y="651.4" font-family="Liberation Sans" font-size="10" fill="#222" text-anchor="end">60</text><text x="631.5" y="651.4" font-family="Liberation Sans" font-size="10" fill="#222">60</text><line x1="451" y1="626.9" x2="625.6" y2="626.9" stroke="#e3e5e9"/><line x1="447" y1="626.9" x2="451" y2="626.9" stroke="#333"/><line x1="625.6" y1="626.9" x2="629.6" y2="626.9" stroke="#333"/><text x="445.5" y="630.4" font-family="Liberation Sans" font-size="10" fill="#222" text-anchor="end">80</text><text x="631.5" y="630.4" font-family="Liberation Sans" font-size="10" fill="#222">80</text><line x1="451" y1="606.0" x2="625.6" y2="606.0" stroke="#e3e5e9"/><line x1="447" y1="606.0" x2="451" y2="606.0" stroke="#333"/><line x1="625.6" y1="606.0" x2="629.6" y2="606.0" stroke="#333"/><text x="445.5" y="609.5" font-family="Liberation Sans" font-size="10" fill="#222" text-anchor="end">100</text><text x="631.5" y="609.5" font-family="Liberation Sans" font-size="10" fill="#222">100</text><line x1="451.0" y1="710.7" x2="451.0" y2="714.7" stroke="#333"/><text x="451.0" y="725.2" font-family="Liberation Sans" font-size="10" fill="#222" text-anchor="middle">0</text><line x1="480.1" y1="710.7" x2="480.1" y2="714.7" stroke="#333"/><text x="480.1" y="725.2" font-family="Liberation Sans" font-size="10" fill="#222" text-anchor="middle">5</text><line x1="509.2" y1="710.7" x2="509.2" y2="714.7" stroke="#333"/><text x="509.2" y="725.2" font-family="Liberation Sans" font-size="10" fill="#222" text-anchor="middle">10</text><line x1="538.3" y1="710.7" x2="538.3" y2="714.7" stroke="#333"/><text x="538.3" y="725.2" font-family="Liberation Sans" font-size="10" fill="#222" text-anchor="middle">15</text><line x1="567.4" y1="710.7" x2="567.4" y2="714.7" stroke="#333"/><text x="567.4" y="725.2" font-family="Liberation Sans" font-size="10" fill="#222" text-anchor="middle">20</text><line x1="596.5" y1="710.7" x2="596.5" y2="714.7" stroke="#333"/><text x="596.5" y="725.2" font-family="Liberation Sans" font-size="10" fill="#222" text-anchor="middle">25</text><line x1="625.6" y1="710.7" x2="625.6" y2="714.7" stroke="#333"/><text x="625.6" y="725.2" font-family="Liberation Sans" font-size="10" fill="#222" text-anchor="middle">30</text><line x1="451" y1="605" x2="451" y2="710.7" stroke="#333" stroke-width="1.2"/><line x1="625.6" y1="605" x2="625.6" y2="710.7" stroke="#333" stroke-width="1.2"/><line x1="451" y1="710.7" x2="625.6" y2="710.7" stroke="#333" stroke-width="1.2"/><text transform="translate(426.5,658.5) rotate(-90)" font-family="Liberation Sans" font-size="11.8" fill="#111" text-anchor="middle">Temp (%)</text><text transform="translate(651,658.5) rotate(90)" font-family="Liberation Sans" font-size="11.8" fill="#111" text-anchor="middle">Humidity</text><text x="539" y="741" font-family="Liberation Sans" font-size="12" fill="#111" text-anchor="middle">Time (hr)</text><polyline points="456.8,658.4 462.6,643.7 468.5,635.3 474.3,643.7 480.1,644.7 485.9,643.7 491.7,644.7 497.6,646.8 503.4,643.7 509.2,640.6 515.0,637.4 520.8,633.2 526.7,634.3 532.5,637.4 538.3,639.5 544.1,635.3 549.9,639.5 555.8,638.5 561.6,636.4 567.4,634.3 573.2,637.4 579.0,635.3 584.9,638.5 590.7,640.6 596.5,642.6 602.3,644.7 608.1,645.8 614.0,639.5 619.8,641.6" fill="none" stroke="#e07a35" stroke-width="1.5"/><circle cx="456.8" cy="658.4" r="1.9" fill="#e07a35"/><circle cx="462.6" cy="643.7" r="1.9" fill="#e07a35"/><circle cx="468.5" cy="635.3" r="1.9" fill="#e07a35"/><circle cx="474.3" cy="643.7" r="1.9" fill="#e07a35"/><circle cx="480.1" cy="644.7" r="1.9" fill="#e07a35"/><circle cx="485.9" cy="643.7" r="1.9" fill="#e07a35"/><circle cx="491.7" cy="644.7" r="1.9" fill="#e07a35"/><circle cx="497.6" cy="646.8" r="1.9" fill="#e07a35"/><circle cx="503.4" cy="643.7" r="1.9" fill="#e07a35"/><circle cx="509.2" cy="640.6" r="1.9" fill="#e07a35"/><circle cx="515.0" cy="637.4" r="1.9" fill="#e07a35"/><circle cx="520.8" cy="633.2" r="1.9" fill="#e07a35"/><circle cx="526.7" cy="634.3" r="1.9" fill="#e07a35"/><circle cx="532.5" cy="637.4" r="1.9" fill="#e07a35"/><circle cx="538.3" cy="639.5" r="1.9" fill="#e07a35"/><circle cx="544.1" cy="635.3" r="1.9" fill="#e07a35"/><circle cx="549.9" cy="639.5" r="1.9" fill="#e07a35"/><circle cx="555.8" cy="638.5" r="1.9" fill="#e07a35"/><circle cx="561.6" cy="636.4" r="1.9" fill="#e07a35"/><circle cx="567.4" cy="634.3" r="1.9" fill="#e07a35"/><circle cx="573.2" cy="637.4" r="1.9" fill="#e07a35"/><circle cx="579.0" cy="635.3" r="1.9" fill="#e07a35"/><circle cx="584.9" cy="638.5" r="1.9" fill="#e07a35"/><circle cx="590.7" cy="640.6" r="1.9" fill="#e07a35"/><circle cx="596.5" cy="642.6" r="1.9" fill="#e07a35"/><circle cx="602.3" cy="644.7" r="1.9" fill="#e07a35"/><circle cx="608.1" cy="645.8" r="1.9" fill="#e07a35"/><circle cx="614.0" cy="639.5" r="1.9" fill="#e07a35"/><circle cx="619.8" cy="641.6" r="1.9" fill="#e07a35"/><polyline points="456.8,660.4 462.6,663.6 468.5,651.0 474.3,653.1 480.1,652.1 485.9,650.0 491.7,651.0 497.6,653.1 503.4,663.6 509.2,663.6 515.0,662.5 520.8,661.5 526.7,660.4 532.5,658.4 538.3,656.3 544.1,657.3 549.9,660.4 555.8,663.6 561.6,662.5 567.4,664.6 573.2,661.5 579.0,661.5 584.9,661.5 590.7,658.4 596.5,655.2 602.3,657.3 608.1,654.2 614.0,656.3 619.8,658.4" fill="none" stroke="#3a70b5" stroke-width="1.5"/><circle cx="456.8" cy="660.4" r="1.9" fill="#3a70b5"/><circle cx="462.6" cy="663.6" r="1.9" fill="#3a70b5"/><circle cx="468.5" cy="651.0" r="1.9" fill="#3a70b5"/><circle cx="474.3" cy="653.1" r="1.9" fill="#3a70b5"/><circle cx="480.1" cy="652.1" r="1.9" fill="#3a70b5"/><circle cx="485.9" cy="650.0" r="1.9" fill="#3a70b5"/><circle cx="491.7" cy="651.0" r="1.9" fill="#3a70b5"/><circle cx="497.6" cy="653.1" r="1.9" fill="#3a70b5"/><circle cx="503.4" cy="663.6" r="1.9" fill="#3a70b5"/><circle cx="509.2" cy="663.6" r="1.9" fill="#3a70b5"/><circle cx="515.0" cy="662.5" r="1.9" fill="#3a70b5"/><circle cx="520.8" cy="661.5" r="1.9" fill="#3a70b5"/><circle cx="526.7" cy="660.4" r="1.9" fill="#3a70b5"/><circle cx="532.5" cy="658.4" r="1.9" fill="#3a70b5"/><circle cx="538.3" cy="656.3" r="1.9" fill="#3a70b5"/><circle cx="544.1" cy="657.3" r="1.9" fill="#3a70b5"/><circle cx="549.9" cy="660.4" r="1.9" fill="#3a70b5"/><circle cx="555.8" cy="663.6" r="1.9" fill="#3a70b5"/><circle cx="561.6" cy="662.5" r="1.9" fill="#3a70b5"/><circle cx="567.4" cy="664.6" r="1.9" fill="#3a70b5"/><circle cx="573.2" cy="661.5" r="1.9" fill="#3a70b5"/><circle cx="579.0" cy="661.5" r="1.9" fill="#3a70b5"/><circle cx="584.9" cy="661.5" r="1.9" fill="#3a70b5"/><circle cx="590.7" cy="658.4" r="1.9" fill="#3a70b5"/><circle cx="596.5" cy="655.2" r="1.9" fill="#3a70b5"/><circle cx="602.3" cy="657.3" r="1.9" fill="#3a70b5"/><circle cx="608.1" cy="654.2" r="1.9" fill="#3a70b5"/><circle cx="614.0" cy="656.3" r="1.9" fill="#3a70b5"/><circle cx="619.8" cy="658.4" r="1.9" fill="#3a70b5"/></svg>
<div class="card" style="left:682px;top:81px;width:450px;height:294px;overflow:hidden"></div>
<div class="hline" style="left:683px;top:114.5px;width:448px"></div>
<div class="t" style="left:692.9px;top:90.7px;font-size:14.4px;color:#111;-webkit-text-stroke:0.35px #111">Recent Test Results</div>
<div class="ab" style="left:977.5px;top:87px;width:119px;height:22px;background:#fff;border:1px solid #c9cdd3;border-radius:3px"></div>
<div class="t" style="left:984.0px;top:92.0px;font-size:11.8px;color:#777;">Search</div>
<svg class="ab" style="left:1077px;top:90px" width="14" height="14" viewBox="0 0 14 14"><circle cx="6" cy="6" r="4.3" fill="none" stroke="#555" stroke-width="1.3"/><path d="M9.2 9.2 L12.8 12.8" stroke="#555" stroke-width="1.4"/></svg>
<div class="dots" style="left:1111.0px;top:90.5px;height:14px"><i style="top:0"></i><i style="top:5px"></i><i style="top:10px"></i></div>
<div class="ab" style="left:683px;top:118.5px;width:438px;height:26px;background:#eceff4;border-top:1px solid #dde0e5;border-bottom:1px solid #d5d8de"></div>
<div class="ab" style="left:775.5px;top:118.5px;width:1px;height:26px;background:#d5d8de"></div>
<div class="ab" style="left:881.7px;top:118.5px;width:1px;height:26px;background:#d5d8de"></div>
<div class="ab" style="left:972.2px;top:118.5px;width:1px;height:26px;background:#d5d8de"></div>
<div class="ab" style="left:1035.7px;top:118.5px;width:1px;height:26px;background:#d5d8de"></div>
<div class="ab" style="left:1120.8px;top:118.5px;width:1px;height:26px;background:#d5d8de"></div>
<div class="t" style="left:690.8px;top:126.4px;font-size:11.6px;color:#141414;font-weight:bold;letter-spacing:-0.25px">Sample ID</div>
<div class="t" style="left:782.7px;top:126.4px;font-size:11.6px;color:#141414;font-weight:bold;letter-spacing:-0.25px">Test Method</div>
<div class="t" style="left:888.7px;top:126.4px;font-size:11.6px;color:#141414;font-weight:bold;letter-spacing:-0.25px">Result</div>
<div class="t" style="left:979.0px;top:126.4px;font-size:11.6px;color:#141414;font-weight:bold;letter-spacing:-0.25px">Unit</div>
<div class="t" style="left:1043.3px;top:126.4px;font-size:11.6px;color:#141414;font-weight:bold;letter-spacing:-0.25px">Pass/Fail</div>
<div class="hline" style="left:683px;top:170.2px;width:438px;background:#dfe2e7"></div>
<div class="hline" style="left:683px;top:194.6px;width:438px;background:#dfe2e7"></div>
<div class="hline" style="left:683px;top:219.4px;width:438px;background:#dfe2e7"></div>
<div class="hline" style="left:683px;top:244.8px;width:438px;background:#dfe2e7"></div>
<div class="hline" style="left:683px;top:270.5px;width:438px;background:#dfe2e7"></div>
<div class="hline" style="left:683px;top:296.3px;width:438px;background:#dfe2e7"></div>
<div class="hline" style="left:683px;top:322px;width:438px;background:#dfe2e7"></div>
<div class="hline" style="left:683px;top:348.3px;width:438px;background:#dfe2e7"></div>
<div class="t" style="left:690.8px;top:152.8px;font-size:11.9px;color:#2a5b9e;">3000011</div>
<div class="t" style="left:782.7px;top:152.8px;font-size:11.9px;color:#151515;letter-spacing:-0.3px">BSP100030</div>
<div class="t" style="left:888.7px;top:152.8px;font-size:11.9px;color:#151515;">8.80</div>
<div class="t" style="left:979.0px;top:152.8px;font-size:11.9px;color:#151515;">mpL</div>
<div class="ab" style="left:1043.3px;top:147.8px;width:64.5px;height:19.6px;background:#d9222a;border-radius:2.5px"></div>
<svg class="ab" style="left:1069px;top:151.1px" width="13" height="13" viewBox="0 0 13 13"><circle cx="6.5" cy="6.5" r="5.7" fill="#fff"/><path d="M4.4 4.4 L8.6 8.6 M8.6 4.4 L4.4 8.6" fill="none" stroke="#d9222a" stroke-width="1.6"/></svg>
<div class="t" style="left:690.8px;top:177.9px;font-size:11.9px;color:#2a5b9e;">3000002</div>
<div class="t" style="left:782.7px;top:177.9px;font-size:11.9px;color:#151515;letter-spacing:-0.3px">BSP100030</div>
<div class="t" style="left:888.7px;top:177.9px;font-size:11.9px;color:#151515;">4.54</div>
<div class="t" style="left:979.0px;top:177.9px;font-size:11.9px;color:#151515;">mpL</div>
<div class="ab" style="left:1043.3px;top:172.9px;width:64.5px;height:19.6px;background:#1e9a3e;border-radius:2.5px"></div>
<svg class="ab" style="left:1069px;top:176.2px" width="13" height="13" viewBox="0 0 13 13"><circle cx="6.5" cy="6.5" r="5.7" fill="#fff"/><path d="M3.7 6.6 L5.8 8.6 L9.3 4.8" fill="none" stroke="#1e9a3e" stroke-width="1.6"/></svg>
<div class="t" style="left:690.8px;top:202.5px;font-size:11.9px;color:#2a5b9e;">3000013</div>
<div class="t" style="left:782.7px;top:202.5px;font-size:11.9px;color:#151515;letter-spacing:-0.3px">BSP100030</div>
<div class="t" style="left:888.7px;top:202.5px;font-size:11.9px;color:#151515;">7.07</div>
<div class="t" style="left:979.0px;top:202.5px;font-size:11.9px;color:#151515;">mpL</div>
<div class="ab" style="left:1043.3px;top:197.5px;width:64.5px;height:19.6px;background:#d9222a;border-radius:2.5px"></div>
<svg class="ab" style="left:1069px;top:200.8px" width="13" height="13" viewBox="0 0 13 13"><circle cx="6.5" cy="6.5" r="5.7" fill="#fff"/><path d="M4.4 4.4 L8.6 8.6 M8.6 4.4 L4.4 8.6" fill="none" stroke="#d9222a" stroke-width="1.6"/></svg>
<div class="t" style="left:690.8px;top:227.1px;font-size:11.9px;color:#2a5b9e;">3000004</div>
<div class="t" style="left:782.7px;top:227.1px;font-size:11.9px;color:#151515;letter-spacing:-0.3px">BSP100030</div>
<div class="t" style="left:888.7px;top:227.1px;font-size:11.9px;color:#151515;">3.87</div>
<div class="t" style="left:979.0px;top:227.1px;font-size:11.9px;color:#151515;">mpL</div>
<div class="ab" style="left:1043.3px;top:222.1px;width:64.5px;height:19.6px;background:#1e9a3e;border-radius:2.5px"></div>
<svg class="ab" style="left:1069px;top:225.4px" width="13" height="13" viewBox="0 0 13 13"><circle cx="6.5" cy="6.5" r="5.7" fill="#fff"/><path d="M3.7 6.6 L5.8 8.6 L9.3 4.8" fill="none" stroke="#1e9a3e" stroke-width="1.6"/></svg>
<div class="t" style="left:690.8px;top:252.9px;font-size:11.9px;color:#2a5b9e;">3000005</div>
<div class="t" style="left:782.7px;top:252.9px;font-size:11.9px;color:#151515;letter-spacing:-0.3px">BSP100030</div>
<div class="t" style="left:888.7px;top:252.9px;font-size:11.9px;color:#151515;">8.9</div>
<div class="t" style="left:979.0px;top:252.9px;font-size:11.9px;color:#151515;">mpL</div>
<div class="ab" style="left:1043.3px;top:247.9px;width:64.5px;height:19.6px;background:#1e9a3e;border-radius:2.5px"></div>
<svg class="ab" style="left:1069px;top:251.2px" width="13" height="13" viewBox="0 0 13 13"><circle cx="6.5" cy="6.5" r="5.7" fill="#fff"/><path d="M3.7 6.6 L5.8 8.6 L9.3 4.8" fill="none" stroke="#1e9a3e" stroke-width="1.6"/></svg>
<div class="t" style="left:690.8px;top:278.8px;font-size:11.9px;color:#2a5b9e;">3000006</div>
<div class="t" style="left:782.7px;top:278.8px;font-size:11.9px;color:#151515;letter-spacing:-0.3px">BSP100030</div>
<div class="t" style="left:888.7px;top:278.8px;font-size:11.9px;color:#151515;">13.4</div>
<div class="t" style="left:979.0px;top:278.8px;font-size:11.9px;color:#151515;">mpL</div>
<div class="ab" style="left:1043.3px;top:273.8px;width:64.5px;height:19.6px;background:#d9222a;border-radius:2.5px"></div>
<svg class="ab" style="left:1069px;top:277.1px" width="13" height="13" viewBox="0 0 13 13"><circle cx="6.5" cy="6.5" r="5.7" fill="#fff"/><path d="M4.4 4.4 L8.6 8.6 M8.6 4.4 L4.4 8.6" fill="none" stroke="#d9222a" stroke-width="1.6"/></svg>
<div class="t" style="left:690.8px;top:304.6px;font-size:11.9px;color:#2a5b9e;">3000007</div>
<div class="t" style="left:782.7px;top:304.6px;font-size:11.9px;color:#151515;letter-spacing:-0.3px">BSP100030</div>
<div class="t" style="left:888.7px;top:304.6px;font-size:11.9px;color:#151515;">10.9</div>
<div class="t" style="left:979.0px;top:304.6px;font-size:11.9px;color:#151515;">mpL</div>
<div class="ab" style="left:1043.3px;top:299.6px;width:64.5px;height:19.6px;background:#d9222a;border-radius:2.5px"></div>
<svg class="ab" style="left:1069px;top:302.9px" width="13" height="13" viewBox="0 0 13 13"><circle cx="6.5" cy="6.5" r="5.7" fill="#fff"/><path d="M4.4 4.4 L8.6 8.6 M8.6 4.4 L4.4 8.6" fill="none" stroke="#d9222a" stroke-width="1.6"/></svg>
<div class="t" style="left:690.8px;top:330.4px;font-size:11.9px;color:#2a5b9e;">3000008</div>
<div class="t" style="left:782.7px;top:330.4px;font-size:11.9px;color:#151515;letter-spacing:-0.3px">BSP100030</div>
<div class="t" style="left:888.7px;top:330.4px;font-size:11.9px;color:#151515;">2.80</div>
<div class="t" style="left:979.0px;top:330.4px;font-size:11.9px;color:#151515;">mpL</div>
<div class="ab" style="left:1043.3px;top:325.4px;width:64.5px;height:19.6px;background:#1e9a3e;border-radius:2.5px"></div>
<svg class="ab" style="left:1069px;top:328.7px" width="13" height="13" viewBox="0 0 13 13"><circle cx="6.5" cy="6.5" r="5.7" fill="#fff"/><path d="M3.7 6.6 L5.8 8.6 L9.3 4.8" fill="none" stroke="#1e9a3e" stroke-width="1.6"/></svg>
<div class="t" style="left:690.8px;top:356.2px;font-size:11.9px;color:#2a5b9e;">3000009</div>
<div class="t" style="left:782.7px;top:356.2px;font-size:11.9px;color:#151515;letter-spacing:-0.3px">BSP100030</div>
<div class="t" style="left:888.7px;top:356.2px;font-size:11.9px;color:#151515;">3.8</div>
<div class="t" style="left:979.0px;top:356.2px;font-size:11.9px;color:#151515;">mpL</div>
<div class="ab" style="left:1043.3px;top:351.2px;width:64.5px;height:19.6px;background:#1e9a3e;border-radius:2.5px"></div>
<svg class="ab" style="left:1069px;top:354.5px" width="13" height="13" viewBox="0 0 13 13"><circle cx="6.5" cy="6.5" r="5.7" fill="#fff"/><path d="M3.7 6.6 L5.8 8.6 L9.3 4.8" fill="none" stroke="#1e9a3e" stroke-width="1.6"/></svg>
<div class="ab" style="left:1121px;top:144.5px;width:1px;height:230px;background:#e6e8ec"></div>
<div class="ab" style="left:1124px;top:146.5px;width:4.5px;height:122.5px;background:#c3c6cb;border-radius:2px"></div>
<div class="card" style="left:682px;top:386px;width:450px;height:142px"></div>
<div class="hline" style="left:683px;top:418.5px;width:448px"></div>
<div class="t" style="left:692.8px;top:395.0px;font-size:14.4px;color:#111;-webkit-text-stroke:0.35px #111">C of A Generation</div>
<div class="dots" style="left:1111.2px;top:396.0px;height:14px"><i style="top:0"></i><i style="top:5px"></i><i style="top:10px"></i></div>
<div class="ab" style="left:692.8px;top:429.6px;width:152.3px;height:25.7px;background:#2a5ea8;border-radius:3px"></div>
<div class="t" style="left:719.4px;top:437.1px;font-size:12.4px;color:#f2f6fb;">C of A Generation</div>
<svg class="ab" style="left:855.5px;top:434px" width="17" height="17" viewBox="0 0 17 17"><circle cx="8.5" cy="8.5" r="8.2" fill="#1e9a3e"/><path d="M4.6 8.7 L7.4 11.4 L12.3 5.9" fill="none" stroke="#fff" stroke-width="1.9"/></svg>
<div class="t" style="left:876.5px;top:436.7px;font-size:12.7px;color:#1e8a38;">Complete</div>
<div class="ab" style="left:692.8px;top:466.5px;width:428px;height:32.2px;background:#eceef2;border:1px solid #d2d5da;border-radius:3px"></div>
<div class="t" style="left:702.3px;top:476.6px;font-size:12.6px;color:#141414;font-weight:bold;">Status</div>
<div class="card" style="left:682px;top:539.6px;width:450px;height:218.4px"></div>
<div class="t" style="left:692.8px;top:548.8px;font-size:14.2px;color:#111;-webkit-text-stroke:0.35px #111">QC Planning Calendar</div>
<svg class="ab" style="left:940px;top:541px" width="160" height="30" viewBox="940 541 160 30">
<circle cx="954.4" cy="555.6" r="12.4" fill="#fff" stroke="#3d3c9a" stroke-width="1.2"/>
<circle cx="954.4" cy="555.6" r="10.6" fill="none" stroke="#3d3c9a" stroke-width="1.6" stroke-dasharray="1.2 1"/>
<circle cx="954.4" cy="555.6" r="8.2" fill="#fff" stroke="#3d3c9a" stroke-width="1"/>
<path d="M949.6 555.6 L953.3 559.3 L960.3 551.2" fill="none" stroke="#3d3c9a" stroke-width="2.4"/>
<rect x="974.8" y="544" width="50.3" height="23.5" rx="11.7" fill="#fff" stroke="#2a9c45" stroke-width="1.3"/>
<path d="M975.5 556 L1024.4 556 L1024.4 557 A11 11 0 0 1 1013.5 567 L986.5 567 A11 11 0 0 1 975.5 557 Z" fill="#2a9c45"/>
<text x="1000" y="553.5" font-family="Liberation Sans" font-weight="bold" font-size="7.2" fill="#236b35" textLength="41" lengthAdjust="spacingAndGlyphs" text-anchor="middle">Compliance</text>
<text x="1000" y="564" font-family="Liberation Sans" font-weight="bold" font-size="6" fill="#fff" text-anchor="middle">STATOIS</text>
<rect x="1032" y="544" width="63.8" height="23.5" rx="11.7" fill="#fff" stroke="#d33a3a" stroke-width="1.3"/>
<path d="M1032.7 556 L1095.1 556 L1095.1 557 A11 11 0 0 1 1084 567 L1044 567 A11 11 0 0 1 1032.7 557 Z" fill="#d33a3a"/>
<text x="1064" y="553.5" font-family="Liberation Sans" font-weight="bold" font-size="7" fill="#b82a2a" text-anchor="middle" textLength="53" lengthAdjust="spacingAndGlyphs">COMPLIANCE</text>
<text x="1064" y="564" font-family="Liberation Sans" font-weight="bold" font-size="6.4" fill="#fff" text-anchor="middle">STATOS</text>
</svg>
<div class="dots" style="left:1111.2px;top:549.0px;height:14px"><i style="top:0"></i><i style="top:5px"></i><i style="top:10px"></i></div>
<div class="ab" style="left:692.8px;top:572.7px;width:428px;height:174.2px;background:#fff;border:1px solid #d3d6db"></div>
<div class="ab" style="left:693.8px;top:573.7px;width:426px;height:23.6px;background:#eceff4"></div>
<svg class="ab" style="left:0;top:0" width="1140" height="768" viewBox="0 0 1140 768"><line x1="693" y1="597.3" x2="1110.4" y2="597.3" stroke="#dcdfe4" stroke-width="1"/><line x1="693" y1="620.5" x2="1110.4" y2="620.5" stroke="#dcdfe4" stroke-width="1"/><line x1="693" y1="643.4" x2="1110.4" y2="643.4" stroke="#dcdfe4" stroke-width="1"/><line x1="693" y1="663.9" x2="1110.4" y2="663.9" stroke="#dcdfe4" stroke-width="1"/><line x1="693" y1="683.7" x2="1110.4" y2="683.7" stroke="#dcdfe4" stroke-width="1"/><line x1="693" y1="703.5" x2="1110.4" y2="703.5" stroke="#dcdfe4" stroke-width="1"/><line x1="693" y1="723.6" x2="1110.4" y2="723.6" stroke="#dcdfe4" stroke-width="1"/><line x1="780.2" y1="573" x2="780.2" y2="723.6" stroke="#dcdfe4" stroke-width="1"/><line x1="846.5" y1="573" x2="846.5" y2="723.6" stroke="#dcdfe4" stroke-width="1"/><line x1="912.4" y1="573" x2="912.4" y2="723.6" stroke="#dcdfe4" stroke-width="1"/><line x1="978.3" y1="573" x2="978.3" y2="723.6" stroke="#dcdfe4" stroke-width="1"/><line x1="1048.3" y1="573" x2="1048.3" y2="723.6" stroke="#dcdfe4" stroke-width="1"/><line x1="1110.4" y1="597.3" x2="1110.4" y2="723.6" stroke="#dcdfe4" stroke-width="1"/></svg>
<div class="t" style="left:787.2px;top:580.0px;font-size:11.8px;color:#151515;-webkit-text-stroke:0.35px #151515">Monday</div>
<div class="t" style="left:853.5px;top:580.0px;font-size:11.8px;color:#151515;-webkit-text-stroke:0.35px #151515">Tuesday</div>
<div class="t" style="left:919.4px;top:580.0px;font-size:11.8px;color:#151515;-webkit-text-stroke:0.35px #151515">Wedday...</div>
<div class="t" style="left:985.3px;top:580.0px;font-size:11.8px;color:#151515;-webkit-text-stroke:0.35px #151515">Thursday</div>
<div class="t" style="left:1055.3px;top:580.0px;font-size:11.8px;color:#151515;-webkit-text-stroke:0.35px #151515">Friday</div>
<div class="t" style="left:700.0px;top:603.7px;font-size:11.8px;color:#151515;-webkit-text-stroke:0.35px #151515">Scheduled 1</div>
<div class="t" style="left:700.0px;top:626.7px;font-size:11.8px;color:#151515;-webkit-text-stroke:0.35px #151515">Scheduled 2</div>
<div class="t" style="left:700.0px;top:648.7px;font-size:11.8px;color:#151515;-webkit-text-stroke:0.35px #151515">Resource</div>
<div class="t" style="left:700.0px;top:708.7px;font-size:11.8px;color:#151515;-webkit-text-stroke:0.35px #151515">Resource</div>
<div class="ab" style="left:782.6px;top:599.3px;width:263.69999999999993px;height:18.800000000000068px;background:#86c994;border-radius:2px"></div>
<svg class="ab" style="left:786.6px;top:604.2px" width="10" height="9" viewBox="0 0 10 9"><path d="M1.3 4.6 L3.8 7 L8.6 2" fill="none" stroke="#2c6a37" stroke-width="1.1"/></svg>
<div class="t" style="left:804.1px;top:604.1px;font-size:11px;color:#1d3b22;">Snfandiuated Tasks</div>
<div class="ab" style="left:782.6px;top:622.3px;width:194.0px;height:18.90000000000009px;background:#86c994;border-radius:2px"></div>
<svg class="ab" style="left:786.6px;top:627.2px" width="10" height="9" viewBox="0 0 10 9"><path d="M1.3 4.6 L3.8 7 L8.6 2" fill="none" stroke="#2c6a37" stroke-width="1.1"/></svg>
<div class="t" style="left:804.1px;top:627.1px;font-size:11px;color:#1d3b22;">Structunit Task Tasks</div>
<div class="ab" style="left:781px;top:644.4px;width:65px;height:19.0px;background:#f5b9b9;overflow:hidden"><div style="position:absolute;left:0;top:0;width:3px;height:100%;background:#cc2d2d"></div></div>
<div class="t" style="left:787.0px;top:649.2px;font-size:11px;color:#222;">Ram Tho...</div>
<div class="ab" style="left:979px;top:644.4px;width:69px;height:19.0px;background:#f5b9b9;overflow:hidden"><div style="position:absolute;left:0;top:0;width:3px;height:100%;background:#cc2d2d"></div></div>
<div class="t" style="left:985.0px;top:649.2px;font-size:11px;color:#222;">Ram Tho...</div>
<div class="ab" style="left:847px;top:664.5px;width:131px;height:19.0px;background:#c4dcf1;overflow:hidden"><div style="position:absolute;left:0;top:0;width:3px;height:100%;background:#2865aa"></div></div>
<div class="t" style="left:853.0px;top:669.3px;font-size:11px;color:#111;">Scheduled Particles Task</div>
<div class="ab" style="left:979px;top:684.3px;width:131px;height:19.0px;background:#c4dcf1;overflow:hidden"><div style="position:absolute;left:0;top:0;width:3px;height:100%;background:#2865aa"></div></div>
<div class="t" style="left:985.0px;top:689.1px;font-size:11px;color:#111;">Scheduled Task Task.-</div>
<div class="ab" style="left:1048.5px;top:704.3px;width:61.5px;height:19.0px;background:#f5b9b9;overflow:hidden"><div style="position:absolute;left:0;top:0;width:3px;height:100%;background:#cc2d2d"></div></div>
<div class="t" style="left:1054.5px;top:709.1px;font-size:11px;color:#222;">Ram Thó...</div>
<div class="ab" style="left:781px;top:724px;width:329px;height:22px;background:#fff"></div>
<div class="ab" style="left:782.6px;top:740.5px;width:235.6px;height:4px;background:#bfc2c7;border-radius:2px"></div>
<div class="ab" style="left:1113.5px;top:600px;width:4.5px;height:107.6px;background:#c3c6cb;border-radius:2px"></div>
<div class="ab" style="left:1143px;top:37px;width:233px;height:731px;background:#fff;border-left:1px solid #d5d8de"></div>
<div class="t" style="left:1156.8px;top:49.6px;font-size:14.7px;color:#111;transform:scaleX(1.0140);transform-origin:0 0;-webkit-text-stroke:0.35px #111">Instrument Integration</div>
<svg class="ab" style="left:1349px;top:49px" width="15" height="15" viewBox="0 0 15 15"><path d="M2.5 2.5 L12.5 12.5 M12.5 2.5 L2.5 12.5" stroke="#444" stroke-width="1.4"/></svg>
<div class="hline" style="left:1144px;top:75px;width:232px;background:#dcdfe4"></div>
<div class="t" style="left:1155.0px;top:85.5px;font-size:12.5px;color:#141414;font-weight:bold;letter-spacing:-0.2px">Connected Status</div>
<div class="ab" style="left:1366.5px;top:78px;width:9px;height:690px;background:#f1f2f4"></div>
<div class="ab" style="left:1367.5px;top:78px;width:5px;height:617.5px;background:#c4c7cc;border-radius:2.5px"></div>
<div class="ab" style="left:1155px;top:108.4px;width:205.5px;height:59px;background:#fff;border:1px solid #d0d4da;border-radius:4px"></div>
<div class="t" style="left:1218.0px;top:121.4px;font-size:14px;color:#111;transform:scaleX(0.9265);transform-origin:0 0;-webkit-text-stroke:0.45px #111">HPLC</div>
<div class="t" style="left:1218.0px;top:141.0px;font-size:13.7px;color:#18843a;-webkit-text-stroke:0.15px #18843a">Connected</div>
<svg class="ab" style="left:1330.5px;top:129.1px" width="18" height="18" viewBox="0 0 18 18"><circle cx="9" cy="9" r="8.6" fill="#1e9a3e"/><path d="M5 9.2 L8 12 L13 6.4" fill="none" stroke="#fff" stroke-width="2"/></svg>
<div class="ab" style="left:1155px;top:175.4px;width:205.5px;height:59px;background:#fff;border:1px solid #d0d4da;border-radius:4px"></div>
<div class="t" style="left:1218.0px;top:188.4px;font-size:14px;color:#111;transform:scaleX(0.9286);transform-origin:0 0;-webkit-text-stroke:0.45px #111">GC</div>
<div class="t" style="left:1218.0px;top:208.0px;font-size:13.7px;color:#18843a;-webkit-text-stroke:0.15px #18843a">Connected</div>
<svg class="ab" style="left:1330.5px;top:196.1px" width="18" height="18" viewBox="0 0 18 18"><circle cx="9" cy="9" r="8.6" fill="#1e9a3e"/><path d="M5 9.2 L8 12 L13 6.4" fill="none" stroke="#fff" stroke-width="2"/></svg>
<div class="ab" style="left:1155px;top:242px;width:205.5px;height:59px;background:#fff;border:1px solid #d0d4da;border-radius:4px"></div>
<div class="t" style="left:1218.0px;top:255.0px;font-size:14px;color:#111;transform:scaleX(0.9286);transform-origin:0 0;-webkit-text-stroke:0.45px #111">GC</div>
<div class="t" style="left:1218.0px;top:274.6px;font-size:13.7px;color:#18843a;-webkit-text-stroke:0.15px #18843a">Connected</div>
<svg class="ab" style="left:1330.5px;top:262.7px" width="18" height="18" viewBox="0 0 18 18"><circle cx="9" cy="9" r="8.6" fill="#1e9a3e"/><path d="M5 9.2 L8 12 L13 6.4" fill="none" stroke="#fff" stroke-width="2"/></svg>
<div class="ab" style="left:1155px;top:309px;width:205.5px;height:59px;background:#fff;border:1px solid #d0d4da;border-radius:4px"></div>
<div class="t" style="left:1218.0px;top:322.0px;font-size:14px;color:#111;transform:scaleX(1.0093);transform-origin:0 0;-webkit-text-stroke:0.45px #111">Spectrophotom...</div>
<div class="t" style="left:1218.0px;top:341.6px;font-size:13.7px;color:#18843a;-webkit-text-stroke:0.15px #18843a">Connected</div>
<svg class="ab" style="left:1330.5px;top:329.7px" width="18" height="18" viewBox="0 0 18 18"><circle cx="9" cy="9" r="8.6" fill="#1e9a3e"/><path d="M5 9.2 L8 12 L13 6.4" fill="none" stroke="#fff" stroke-width="2"/></svg>
<div class="ab" style="left:1155px;top:376.6px;width:205.5px;height:59px;background:#fff;border:1px solid #d0d4da;border-radius:4px"></div>
<div class="t" style="left:1218.0px;top:389.6px;font-size:14px;color:#111;transform:scaleX(1.0093);transform-origin:0 0;-webkit-text-stroke:0.45px #111">Spectrophotom...</div>
<div class="t" style="left:1218.0px;top:409.2px;font-size:13.7px;color:#18843a;-webkit-text-stroke:0.15px #18843a">Connected</div>
<svg class="ab" style="left:1330.5px;top:397.3px" width="18" height="18" viewBox="0 0 18 18"><circle cx="9" cy="9" r="8.6" fill="#1e9a3e"/><path d="M5 9.2 L8 12 L13 6.4" fill="none" stroke="#fff" stroke-width="2"/></svg>
<div class="ab" style="left:1155px;top:443.4px;width:205.5px;height:59px;background:#fff;border:1px solid #d0d4da;border-radius:4px"></div>
<div class="t" style="left:1218.0px;top:456.4px;font-size:14px;color:#111;transform:scaleX(0.9725);transform-origin:0 0;-webkit-text-stroke:0.45px #111">GCL Elevics</div>
<div class="t" style="left:1218.0px;top:476.0px;font-size:13.7px;color:#18843a;-webkit-text-stroke:0.15px #18843a">Connected</div>
<svg class="ab" style="left:1330.5px;top:464.1px" width="18" height="18" viewBox="0 0 18 18"><circle cx="9" cy="9" r="8.6" fill="#1e9a3e"/><path d="M5 9.2 L8 12 L13 6.4" fill="none" stroke="#fff" stroke-width="2"/></svg>
<div class="ab" style="left:1155px;top:510.5px;width:205.5px;height:59px;background:#fff;border:1px solid #d0d4da;border-radius:4px"></div>
<div class="t" style="left:1218.0px;top:523.5px;font-size:14px;color:#111;transform:scaleX(1.0093);transform-origin:0 0;-webkit-text-stroke:0.45px #111">Spectrophotom...</div>
<div class="t" style="left:1218.0px;top:543.1px;font-size:13.7px;color:#18843a;-webkit-text-stroke:0.15px #18843a">Connected</div>
<svg class="ab" style="left:1330.5px;top:531.2px" width="18" height="18" viewBox="0 0 18 18"><circle cx="9" cy="9" r="8.6" fill="#1e9a3e"/><path d="M5 9.2 L8 12 L13 6.4" fill="none" stroke="#fff" stroke-width="2"/></svg>
<svg class="ab" style="left:1160px;top:108px" width="55" height="60" viewBox="0 0 55 60">
<path d="M17.6 21.1 L17.6 16.5 Q17.6 13.5 19.8 12.6 L19.8 11.2 L18.5 11.2 L18.5 10.2 L23.6 10.2 L23.6 11.2 L22.4 11.2 L22.4 12.6 Q24.6 13.5 24.6 16.5 L24.6 21.1 Z" fill="none" stroke="#2d5fa6" stroke-width="1.3"/>
<rect x="20" y="16.5" width="2.2" height="3" fill="#2d5fa6"/>
<path d="M26.6 21.1 L26.6 16.5 Q26.6 13.5 28.8 12.6 L28.8 11.2 L27.5 11.2 L27.5 10.2 L33.6 10.2 L33.6 11.2 L32.4 11.2 L32.4 12.6 Q34.8 13.5 34.8 16.5 L34.8 21.1 Z" fill="#2d5fa6"/>
<rect x="12.9" y="21.1" width="28.1" height="4.8" fill="#2d5fa6"/>
<rect x="12.9" y="28.1" width="28.1" height="11.7" fill="#2d5fa6"/>
<rect x="14.8" y="30.9" width="14.2" height="7" fill="#ffffff"/>
<g fill="#ffffff"><rect x="32.2" y="30.3" width="1.4" height="1.2"/><rect x="34.8" y="30.3" width="2.6" height="1.2"/><rect x="32.2" y="32.8" width="1.4" height="1.2"/><rect x="34.8" y="32.8" width="2.6" height="1.2"/><rect x="32.2" y="35.3" width="1.4" height="1.2"/><rect x="34.8" y="35.3" width="2.6" height="1.2"/><rect x="32.2" y="37.6" width="1.4" height="1.2"/><rect x="34.8" y="37.6" width="2.6" height="1.2"/></g>
<rect x="12.9" y="41" width="28.1" height="9" fill="#2d5fa6"/>
<rect x="34.2" y="46.5" width="1.8" height="1.8" fill="#ffffff"/>
</svg>
<svg class="ab" style="left:1160px;top:175px" width="55" height="60" viewBox="0 0 55 60">
<rect x="14.5" y="10.5" width="4.6" height="13.7" fill="#2d5fa6"/>
<rect x="16.2" y="12" width="1.2" height="1.2" fill="#ffffff"/>
<rect x="9" y="23.2" width="5" height="1.5" fill="#2d5fa6"/><rect x="21.5" y="22.9" width="11.3" height="1.8" fill="#2d5fa6"/>
<rect x="9" y="26.2" width="23.8" height="21.5" fill="#2d5fa6"/>
<rect x="34.4" y="20.7" width="10.5" height="27" fill="#2d5fa6"/>
<rect x="36.1" y="25.2" width="7" height="3.3" fill="#ffffff"/>
<g fill="#dce8f6"><rect x="36.5" y="34.0" width="1.5" height="1.6"/><rect x="38.7" y="34.0" width="1.5" height="1.6"/><rect x="40.9" y="34.0" width="1.5" height="1.6"/><rect x="36.5" y="36.5" width="1.5" height="1.6"/><rect x="38.7" y="36.5" width="1.5" height="1.6"/><rect x="40.9" y="36.5" width="1.5" height="1.6"/><rect x="36.5" y="39.0" width="1.5" height="1.6"/><rect x="38.7" y="39.0" width="1.5" height="1.6"/><rect x="40.9" y="39.0" width="1.5" height="1.6"/><rect x="36.5" y="41.5" width="1.5" height="1.6"/><rect x="38.7" y="41.5" width="1.5" height="1.6"/><rect x="40.9" y="41.5" width="1.5" height="1.6"/><rect x="36.5" y="44.0" width="1.5" height="1.6"/><rect x="38.7" y="44.0" width="1.5" height="1.6"/><rect x="40.9" y="44.0" width="1.5" height="1.6"/></g>
<rect x="9" y="46.6" width="35.9" height="1.2" fill="#2d5fa6"/>
</svg>
<svg class="ab" style="left:1160px;top:242px" width="55" height="60" viewBox="0 0 55 60">
<rect x="17" y="11" width="1.8" height="11" fill="#2d5fa6"/>
<rect x="21.2" y="11" width="3.6" height="11" fill="#2d5fa6"/>
<rect x="9" y="22.8" width="23.8" height="2" fill="#2d5fa6"/>
<rect x="9" y="26.5" width="23.8" height="19.2" fill="#2d5fa6"/>
<rect x="35" y="21" width="10" height="24.5" fill="#2d5fa6"/>
<rect x="36.1" y="25.2" width="7" height="3.3" fill="#ffffff"/>
<g fill="#dce8f6"><rect x="36.1" y="33.3" width="1.6" height="1.6"/><rect x="38.4" y="33.3" width="1.6" height="1.6"/><rect x="40.7" y="33.3" width="1.6" height="1.6"/><rect x="36.1" y="35.6" width="1.6" height="1.6"/><rect x="38.4" y="35.6" width="1.6" height="1.6"/><rect x="40.7" y="35.6" width="1.6" height="1.6"/><rect x="36.1" y="37.9" width="1.6" height="1.6"/><rect x="38.4" y="37.9" width="1.6" height="1.6"/><rect x="40.7" y="37.9" width="1.6" height="1.6"/><rect x="36.1" y="40.2" width="1.6" height="1.6"/><rect x="38.4" y="40.2" width="1.6" height="1.6"/><rect x="40.7" y="40.2" width="1.6" height="1.6"/><rect x="36.1" y="42.5" width="1.6" height="1.6"/><rect x="38.4" y="42.5" width="1.6" height="1.6"/><rect x="40.7" y="42.5" width="1.6" height="1.6"/></g>
<rect x="9" y="46.8" width="35.9" height="2" fill="#2d5fa6"/>
</svg>
<svg class="ab" style="left:1160px;top:309px" width="55" height="60" viewBox="0 0 55 60">
<path d="M5.9 26 Q7.5 19 12 18.8 L27.5 18.8 L27.5 31.3 L42 31.3 L42 19.6 Q46 21 47.7 26.5 L47.7 39 Q47.7 43 44 43 L42.5 43 L42.5 44.9 L35 44.9 L35 43 L18 43 L18 44.9 L11 44.9 L11 43 L9.5 43 Q5.9 43 5.9 39 Z" fill="#2d5fa6"/>
<rect x="28.5" y="14" width="13.3" height="17.5" rx="1" fill="#2d5fa6"/>
<rect x="30.1" y="16" width="10.1" height="6.7" fill="#ffffff"/>
<path d="M6.2 27 Q17 29.5 27.8 29.3 M28.5 28.8 Q30 31 34 31.5 Q40 31.3 47.6 27" fill="none" stroke="#ffffff" stroke-width="0.9"/>
<circle cx="14.5" cy="37.9" r="1.9" fill="#ffffff"/><circle cx="18.8" cy="38.2" r="0.9" fill="#ffffff"/>
</svg>
<svg class="ab" style="left:1160px;top:376px" width="55" height="60" viewBox="0 0 55 60">
<rect x="14.8" y="16.4" width="12.5" height="14.1" fill="#2d5fa6"/>
<circle cx="20.7" cy="27.7" r="1.2" fill="#ffffff"/>
<path d="M26 16.6 Q26 13.4 29 13.4 Q32 13.4 32 16.6 L32 30.5" fill="none" stroke="#2d5fa6" stroke-width="1.2"/>
<rect x="30" y="30.5" width="9.5" height="12.9" fill="#2d5fa6"/>
<g fill="#dce8f6"><rect x="34" y="36" width="1" height="1"/><rect x="32.5" y="38" width="1" height="1"/><rect x="36" y="38" width="1" height="1"/><rect x="34" y="40" width="1" height="1"/></g>
<path d="M15.6 34.8 L27.7 34.8 L27.7 39 L20.7 39 L20.7 43.4 L28.5 43.4 L28.5 47.7 L14 47.7 L14 43.4 L15.6 43.4 Z" fill="#2d5fa6"/>
</svg>
<svg class="ab" style="left:1160px;top:443px" width="55" height="60" viewBox="0 0 55 60">
<text x="11" y="20.3" font-family="Liberation Sans" font-size="9.5" fill="none" stroke="#777" stroke-width="0.5">Dk</text>
<rect x="12.5" y="22.3" width="15.2" height="1.6" fill="#2d5fa6"/>
<rect x="7" y="25.8" width="26.75" height="21.9" fill="#2d5fa6"/>
<g fill="#dce8f6"><circle cx="15.5" cy="31.5" r="0.6"/><circle cx="13.5" cy="33.5" r="0.6"/><circle cx="12.5" cy="36" r="0.6"/><circle cx="14.5" cy="37.5" r="0.6"/><circle cx="12.3" cy="39" r="0.6"/><circle cx="15.5" cy="40" r="0.6"/><circle cx="18.5" cy="36.5" r="0.6"/><circle cx="17.5" cy="39.5" r="0.6"/><circle cx="11.8" cy="42" r="0.6"/><circle cx="17.2" cy="42" r="0.6"/></g>
<rect x="39" y="11.3" width="3.6" height="12.1" fill="#2d5fa6"/>
<rect x="35.3" y="25.8" width="11.6" height="21.9" fill="#2d5fa6"/>
<rect x="37.7" y="28.9" width="7.3" height="3.1" fill="#ffffff"/>
<g fill="#dce8f6"><rect x="37.7" y="36.0" width="2" height="1.6"/><rect x="40.2" y="36.0" width="2" height="1.6"/><rect x="42.7" y="36.0" width="2" height="1.6"/><rect x="37.7" y="38.3" width="2" height="1.6"/><rect x="40.2" y="38.3" width="2" height="1.6"/><rect x="42.7" y="38.3" width="2" height="1.6"/><rect x="37.7" y="40.6" width="2" height="1.6"/><rect x="40.2" y="40.6" width="2" height="1.6"/><rect x="42.7" y="40.6" width="2" height="1.6"/><rect x="37.7" y="42.9" width="2" height="1.6"/><rect x="40.2" y="42.9" width="2" height="1.6"/><rect x="42.7" y="42.9" width="2" height="1.6"/></g>
</svg>
<svg class="ab" style="left:1160px;top:510px" width="55" height="60" viewBox="0 0 55 60">
<path d="M7.4 24 Q7.4 18 10 17.3 L12.9 17.3 L12.9 27 L23 27 L23 14 L26.5 14 L26.5 17.2 Q35 18.5 39 24.5 L39 34.4 L7.4 34.4 Z" fill="#2d5fa6"/>
<rect x="40.6" y="21.9" width="5.4" height="12.5" rx="1.2" fill="#2d5fa6"/>
<path d="M9 36.3 L44 36.3 L44 41.5 Q44 43.2 42 43.2 L41 43.9 L39 43.9 L38 43.2 L15 43.2 L14 43.9 L12 43.9 L11 43.2 Q9 43.2 9 41.5 Z" fill="#2d5fa6"/>
<g fill="#e3ecf8"><rect x="27.5" y="39" width="2.6" height="1"/><rect x="31.5" y="39" width="1.3" height="1"/><rect x="34" y="39" width="1.3" height="1"/><rect x="37.5" y="39" width="1.3" height="1"/></g>
</svg>
</body></html>
